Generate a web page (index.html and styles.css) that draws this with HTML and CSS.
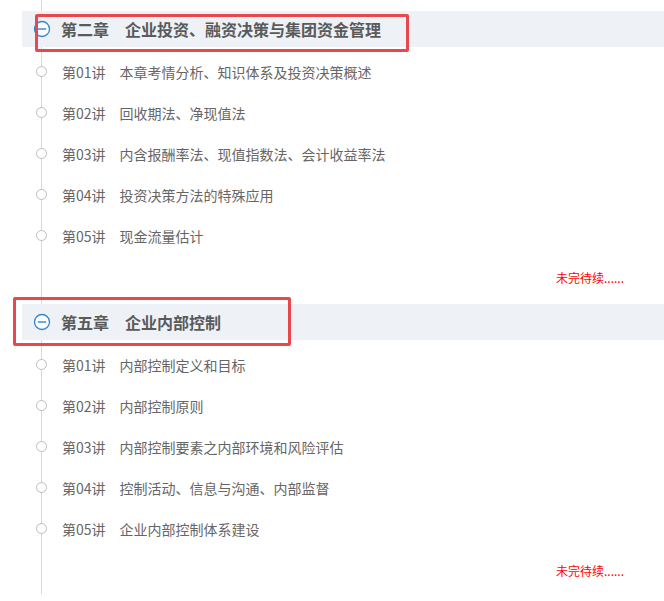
FILE: index.html
```html
<!DOCTYPE html>
<html lang="zh-CN">
<head>
<meta charset="utf-8">
<title>章节目录</title>
<link rel="stylesheet" href="styles.css">
</head>
<body>
<div class="page">
  <section class="chapter chapter-first">
    <div class="chapter-head">
      <svg class="toggle" viewBox="0 0 18 18" width="18" height="18"><circle cx="9" cy="9" r="7.5" fill="#fff" stroke="#2f86d6" stroke-width="1.3"/><line x1="4.8" y1="9" x2="13.2" y2="9" stroke="#2f86d6" stroke-width="1.4"/></svg>
      <h2 class="chapter-title">第二章　企业投资、融资决策与集团资金管理</h2>
      <span class="mark mark-one"></span>
    </div>
    <ul class="lessons">
      <li class="lesson"><span class="dot"></span><span class="num">第01讲</span><span class="name">本章考情分析、知识体系及投资决策概述</span></li>
      <li class="lesson"><span class="dot"></span><span class="num">第02讲</span><span class="name">回收期法、净现值法</span></li>
      <li class="lesson"><span class="dot"></span><span class="num">第03讲</span><span class="name">内含报酬率法、现值指数法、会计收益率法</span></li>
      <li class="lesson"><span class="dot"></span><span class="num">第04讲</span><span class="name">投资决策方法的特殊应用</span></li>
      <li class="lesson"><span class="dot"></span><span class="num">第05讲</span><span class="name">现金流量估计</span></li>
    </ul>
    <p class="more">未完待续......</p>
  </section>
  <section class="chapter">
    <div class="chapter-head">
      <svg class="toggle" viewBox="0 0 18 18" width="18" height="18"><circle cx="9" cy="9" r="7.5" fill="#fff" stroke="#2f86d6" stroke-width="1.3"/><line x1="4.8" y1="9" x2="13.2" y2="9" stroke="#2f86d6" stroke-width="1.4"/></svg>
      <h2 class="chapter-title">第五章　企业内部控制</h2>
      <span class="mark mark-two"></span>
    </div>
    <ul class="lessons">
      <li class="lesson"><span class="dot"></span><span class="num">第01讲</span><span class="name">内部控制定义和目标</span></li>
      <li class="lesson"><span class="dot"></span><span class="num">第02讲</span><span class="name">内部控制原则</span></li>
      <li class="lesson"><span class="dot"></span><span class="num">第03讲</span><span class="name">内部控制要素之内部环境和风险评估</span></li>
      <li class="lesson"><span class="dot"></span><span class="num">第04讲</span><span class="name">控制活动、信息与沟通、内部监督</span></li>
      <li class="lesson"><span class="dot"></span><span class="num">第05讲</span><span class="name">企业内部控制体系建设</span></li>
    </ul>
    <p class="more">未完待续......</p>
  </section>
</div>
</body>
</html>
```

FILE: styles.css
```css
html, body {
  margin: 0;
  padding: 0;
  background: #fff;
}

.page {
  width: 664px;
  height: 601px;
  overflow: hidden;
  font-family: "Noto Sans CJK SC", "Noto Sans", sans-serif;
  background: linear-gradient(#d9d9d9, #d9d9d9) no-repeat 41px 0 / 1px 594px;
}

.chapter-first {
  padding-top: 11px;
}

.chapter + .chapter {
  margin-top: 18px;
}

.chapter-head {
  position: relative;
  margin-left: 22px;
  height: 36px;
  background: #eef1f5;
  display: flex;
  align-items: center;
  padding-left: 11px;
}

.toggle {
  flex: none;
  display: block;
}

.chapter-title {
  margin: 0 0 0 10px;
  font-size: 16px;
  font-weight: bold;
  color: #5a5a5a;
  line-height: 36px;
  white-space: nowrap;
}

.mark {
  position: absolute;
  border: 3px solid #e8474b;
  border-radius: 2px;
  box-sizing: border-box;
}

.mark-one {
  left: 13px;
  top: 3px;
  width: 374px;
  height: 38px;
}

.mark-two {
  left: -9px;
  top: -7px;
  width: 278px;
  height: 49px;
}

.lessons {
  list-style: none;
  margin: 4px 0 0;
  padding: 0;
}

.lesson {
  height: 41px;
  display: flex;
  align-items: center;
  padding-left: 36px;
  font-size: 14px;
  color: #666;
  white-space: nowrap;
}

.dot {
  flex: none;
  width: 11px;
  height: 11px;
  box-sizing: border-box;
  border: 1px solid #bdbdbd;
  border-radius: 50%;
  background: #fff;
  margin-right: 15px;
}

.num {
  margin-right: 14px;
}

.more {
  margin: 14px 0 0;
  padding-right: 40px;
  text-align: right;
  font-size: 12px;
  line-height: 16px;
  color: #ff0000;
}
```
